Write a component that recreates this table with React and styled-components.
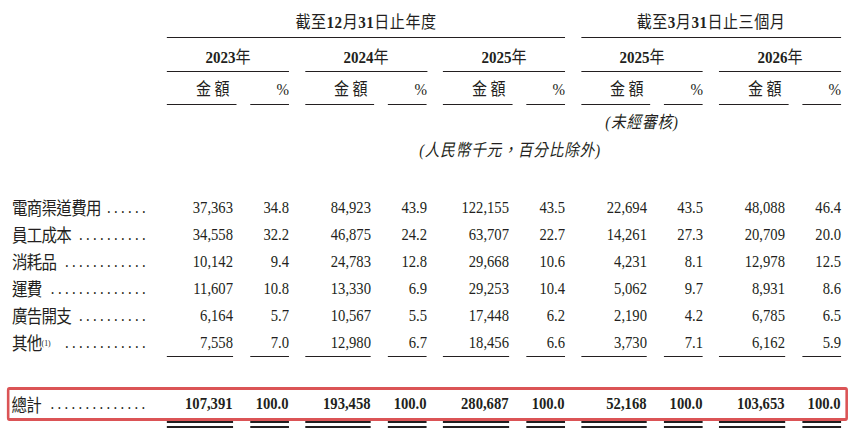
import React from 'react';
import styled, { createGlobalStyle } from 'styled-components';

// the statement is set in a narrow face: lay out at full width, then squeeze
const S = 0.86;
const x = n => `${(n / S).toFixed(2)}px`;

const GlobalStyle = createGlobalStyle`
  body {
    margin: 0;
    background: #fff;
    color: #231f20;
    font-family: "Liberation Serif", "Noto Sans CJK TC", serif;
  }
`;

const Page = styled.div`
  width: 854px;
  height: 430px;
  overflow: hidden;
`;

const Sheet = styled.div`
  width: ${x(854)};
  font-size: 17px;
  transform: scaleX(${S});
  transform-origin: 0 0;
`;

const Row = styled.div`
  display: flex;
  align-items: flex-end;
  margin-top: ${p => p.$top || 0}px;
`;

const Spacer = styled.div`
  width: ${x(167)};
  flex-shrink: 0;
`;

const Groups = styled.div`
  display: grid;
  grid-template-columns: repeat(5, ${x(122)});
  column-gap: ${x(16)};
`;

const Pair = styled.div`
  display: grid;
  grid-template-columns: ${x(66)} ${x(39)};
  column-gap: ${x(17)};
`;

const Period = styled.div`
  grid-column: span ${p => p.$span};
  text-align: center;
  font-size: 17.5px;
  line-height: 20px;
  letter-spacing: 0.6px;
  padding: 12px 0 5px;
  border-bottom: 1px solid #231f20;
`;

const Year = styled.div`
  text-align: center;
  font-size: 17.5px;
  line-height: 20px;
  padding: 9px 0 4px;
  border-bottom: 1px solid #231f20;
`;

const B = styled.span`
  font-weight: 700;
`;

const Sub = styled.div`
  text-align: right;
  font-size: 17.5px;
  line-height: 20px;
  padding: 7px 0 5px;
  border-bottom: 1px solid #231f20;
  letter-spacing: ${p => (p.$cjk ? '4px' : '0')};
  margin-right: ${p => (p.$cjk ? '-4px' : '0')};
  padding-right: ${p => (p.$cjk ? '4px' : '0')};
`;

const Italic = styled.div`
  grid-column: ${p => p.$col || 'auto'};
  font-style: italic;
  text-align: center;
  line-height: 20px;
  letter-spacing: 1px;
  padding-left: ${p => p.$shift || 0}px;
`;

const Label = styled.div`
  width: ${p => x(p.$w || 167)};
  flex-shrink: 0;
  box-sizing: border-box;
  padding: 0 ${x(18)} 0 ${p => x(p.$pl || 12)};
  display: flex;
  align-items: center;
  font-family: "Noto Sans CJK TC", sans-serif;
  font-size: 18px;
  letter-spacing: -0.8px;
  white-space: nowrap;
`;

const Sup = styled.sup`
  font-family: "Liberation Serif", serif;
  font-size: 9px;
  letter-spacing: 0;
  vertical-align: 6px;
  line-height: 0;
`;

const Dots = styled.span`
  margin-left: auto;
  padding-left: 5px;
  font-family: "Liberation Serif", serif;
  font-size: 17px;
  letter-spacing: 3.9px;
`;

const DataRow = styled.div`
  display: flex;
  height: 27px;
  line-height: 27px;
`;

const Value = styled.div`
  text-align: right;
  font-size: 17px;
  font-weight: ${p => (p.$bold ? 700 : 400)};
  box-sizing: border-box;
  border-bottom: ${p => (p.$rule ? '1px solid #231f20' : '0')};
`;

const TotalBox = styled.div`
  display: flex;
  align-items: center;
  margin: 31px 0 0 ${x(7)};
  width: ${x(841)};
  height: 34px;
  box-sizing: border-box;
  border: 3px solid #db5456;
  border-left-width: ${x(3)};
  border-right-width: ${x(3)};
  border-radius: 3px;
  line-height: 28px;
`;

const Double = styled.div`
  height: 3px;
  border-top: 2px solid #231f20;
  border-bottom: 2px solid #231f20;
`;

const years = ['2023', '2024', '2025', '2025', '2026'];

const rows = [
  { label: '電商渠道費用', dots: 6, v: ['37,363', '34.8', '84,923', '43.9', '122,155', '43.5', '22,694', '43.5', '48,088', '46.4'] },
  { label: '員工成本', dots: 10, v: ['34,558', '32.2', '46,875', '24.2', '63,707', '22.7', '14,261', '27.3', '20,709', '20.0'] },
  { label: '消耗品', dots: 12, v: ['10,142', '9.4', '24,783', '12.8', '29,668', '10.6', '4,231', '8.1', '12,978', '12.5'] },
  { label: '運費', dots: 14, v: ['11,607', '10.8', '13,330', '6.9', '29,253', '10.4', '5,062', '9.7', '8,931', '8.6'] },
  { label: '廣告開支', dots: 10, v: ['6,164', '5.7', '10,567', '5.5', '17,448', '6.2', '2,190', '4.2', '6,785', '6.5'] },
  { label: '其他', note: '(1)', dots: 12, v: ['7,558', '7.0', '12,980', '6.7', '18,456', '6.6', '3,730', '7.1', '6,162', '5.9'] },
];

const total = ['107,391', '100.0', '193,458', '100.0', '280,687', '100.0', '52,168', '100.0', '103,653', '100.0'];

function Values({ v, rule, bold }) {
  return (
    <Groups>
      {[0, 1, 2, 3, 4].map(i => (
        <Pair key={i}>
          <Value $rule={rule} $bold={bold}>{v[i * 2]}</Value>
          <Value $rule={rule} $bold={bold}>{v[i * 2 + 1]}</Value>
        </Pair>
      ))}
    </Groups>
  );
}

function App() {
  return (
    <Page>
      <GlobalStyle />
      <Sheet>
        <Row>
          <Spacer />
          <Groups>
            <Period $span={3}>截至<B>12</B>月<B>31</B>日止年度</Period>
            <Period $span={2}>截至<B>3</B>月<B>31</B>日止三個月</Period>
          </Groups>
        </Row>
        <Row>
          <Spacer />
          <Groups>
            {years.map((y, i) => (
              <Year key={i}><B>{y}</B>年</Year>
            ))}
          </Groups>
        </Row>
        <Row>
          <Spacer />
          <Groups>
            {years.map((y, i) => (
              <Pair key={i}>
                <Sub $cjk>金額</Sub>
                <Sub>%</Sub>
              </Pair>
            ))}
          </Groups>
        </Row>
        <Row $top={8}>
          <Spacer />
          <Groups>
            <Italic $col={4}>(未經審核)</Italic>
          </Groups>
        </Row>
        <Row $top={8}>
          <Spacer />
          <Groups>
            <Italic $col="1 / span 5" $shift={14}>(人民幣千元，百分比除外)</Italic>
          </Groups>
        </Row>
        <div style={{ height: 33 }} />
        {rows.map((r, i) => (
          <DataRow key={r.label}>
            <Label>
              {r.label}
              {r.note && <Sup>{r.note}</Sup>}
              <Dots>{'.'.repeat(r.dots)}</Dots>
            </Label>
            <Values v={r.v} rule={i === rows.length - 1} />
          </DataRow>
        ))}
        <TotalBox>
          <Label $w={157} $pl={2}>
            總計
            <Dots>{'.'.repeat(14)}</Dots>
          </Label>
          <Values v={total} bold />
        </TotalBox>
        <Row>
          <Spacer />
          <Groups>
            {years.map((y, i) => (
              <Pair key={i}>
                <Double />
                <Double />
              </Pair>
            ))}
          </Groups>
        </Row>
      </Sheet>
    </Page>
  );
}

export default App;
